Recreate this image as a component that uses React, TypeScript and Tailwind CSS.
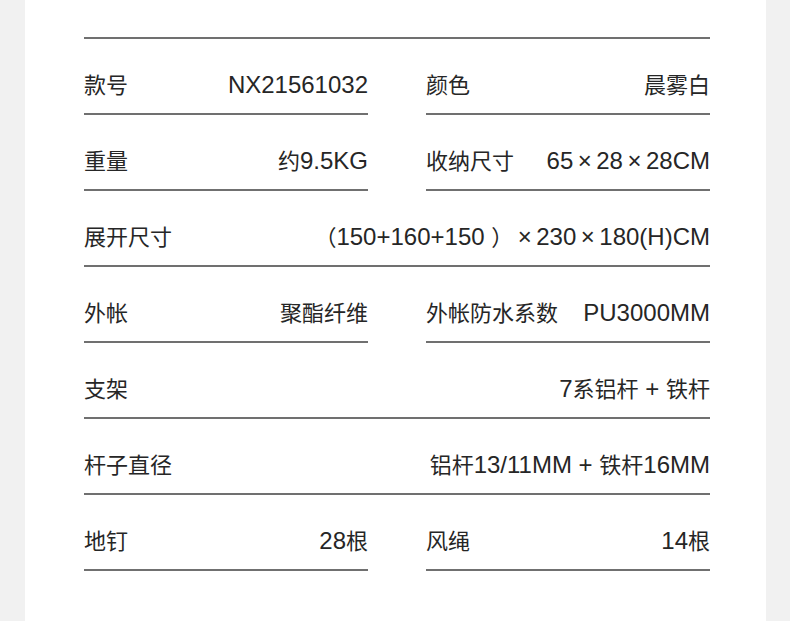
type Cell = { label: string; value: string };

const rows: (Cell | [Cell, Cell])[] = [
  [
    { label: "款号", value: "NX21561032" },
    { label: "颜色", value: "晨雾白" },
  ],
  [
    { label: "重量", value: "约9.5KG" },
    { label: "收纳尺寸", value: "65×28×28CM" },
  ],
  { label: "展开尺寸", value: "（150+160+150 ）×230×180(H)CM" },
  [
    { label: "外帐", value: "聚酯纤维" },
    { label: "外帐防水系数", value: "PU3000MM" },
  ],
  { label: "支架", value: "7系铝杆 + 铁杆" },
  { label: "杆子直径", value: "铝杆13/11MM + 铁杆16MM" },
  [
    { label: "地钉", value: "28根" },
    { label: "风绳", value: "14根" },
  ],
];

// CJK glyphs sit at 22px, latin digits/letters at 24px like the source artwork
function Value({ text }: { text: string }) {
  const parts = text.match(/[\u4e00-\u9fff（）]+|×|[^\u4e00-\u9fff（）×]+/g) ?? [];
  return (
    <span className="whitespace-pre">
      {parts.map((p, i) => {
        if (p === "×")
          return (
            <span key={i} className="inline-block w-[23px] text-center text-[24px]">
              ×
            </span>
          );
        if (/[\u4e00-\u9fff（）]/.test(p))
          return (
            <span key={i} className="text-[22px]">
              {p}
            </span>
          );
        return (
          <span key={i} className="text-[24px]">
            {p}
          </span>
        );
      })}
    </span>
  );
}

function SpecCell({ label, value }: Cell) {
  return (
    <div className="flex flex-col">
      <div className="flex h-[74px] items-end justify-between pb-[14px] text-[22px] leading-[26px] text-[#262626]">
        <span>{label}</span>
        <Value text={value} />
      </div>
      <div className="h-[2px] bg-[#707070]" />
    </div>
  );
}

export default function App() {
  return (
    <div
      className="flex h-[621px] w-[790px] bg-[#f1f1f1]"
      style={{ fontFamily: '"Liberation Sans", "Noto Sans CJK SC", sans-serif' }}
    >
      <div className="ml-[25px] h-full w-[741px] bg-white pl-[59px] pt-[37px]">
        <div className="w-[626px]">
          <div className="h-[2px] bg-[#707070]" />
          {rows.map((row, i) =>
            Array.isArray(row) ? (
              <div key={i} className="grid grid-cols-2 gap-x-[58px]">
                <SpecCell {...row[0]} />
                <SpecCell {...row[1]} />
              </div>
            ) : (
              <SpecCell key={i} {...row} />
            )
          )}
        </div>
      </div>
    </div>
  );
}
